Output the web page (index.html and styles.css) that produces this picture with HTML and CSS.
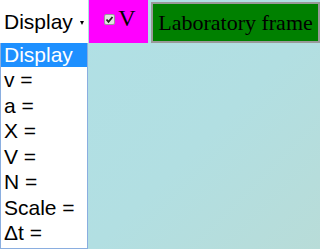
FILE: index.html
```html
<!DOCTYPE html>
<html>
<head>
<meta charset="utf-8">
<title>Frame</title>
<link rel="stylesheet" href="styles.css">
</head>
<body>
<div class="bar">
	<div class="picker">
		<div class="select">Display <span class="arrow"></span></div>
		<ul class="list">
			<li class="on">Display</li>
			<li>v =</li>
			<li>a =</li>
			<li>X =</li>
			<li>V =</li>
			<li>N =</li>
			<li>Scale =</li>
			<li>Δt =</li>
		</ul>
	</div>
	<label class="check"><span class="box"><svg width="9" height="9" viewBox="0 0 9 9"><path d="M1.5 4.5 L3.5 6.8 L7.5 2" fill="none" stroke="#222" stroke-width="1.8"/></svg></span>V</label>
	<button class="frame">Laboratory frame</button>
</div>
</body>
</html>
```
FILE: styles.css
```css
*{margin:0;padding:0;list-style:none;box-sizing:border-box;}
body{width:320px;height:249px;overflow:hidden;background:linear-gradient(135deg,#b0e0e6 0%,#b2dfe2 60%,#b8dcd8 100%);}
.bar{display:flex;align-items:flex-start;}
.picker{width:88px;}
.select{height:43px;background:#fff;font:21px "Liberation Sans",Arial,sans-serif;color:#000;display:flex;align-items:center;padding-left:4px;gap:7px;}
.arrow{width:0;height:0;border-left:2.5px solid transparent;border-right:2.5px solid transparent;border-top:4px solid #000;margin-top:2px;}
.list{background:#fff;border:1px solid #8aaee0;border-top:none;height:206px;overflow:hidden;font:21px "Liberation Sans",Arial,sans-serif;color:#000;}
.list li{height:25.5px;line-height:25.5px;padding-left:3px;}
.list li.on{background:#1e90ff;color:#fff;height:24px;line-height:24px;}
.check{width:59px;height:43px;margin-left:1px;background:#f0f;display:flex;align-items:flex-start;justify-content:center;padding-top:5px;padding-left:3px;font:24px "Liberation Serif","Times New Roman",serif;color:#000;gap:3px;}
.box{width:11px;height:11px;margin-top:9px;background:#e2e2e2;border:1px solid #999;border-radius:2px;display:flex;align-items:center;justify-content:center;}
.frame{margin-left:3px;margin-top:2px;width:169px;height:41px;background:#008000;border:2px solid #999;font:22px "Liberation Serif","Times New Roman",serif;color:#000;}
```
